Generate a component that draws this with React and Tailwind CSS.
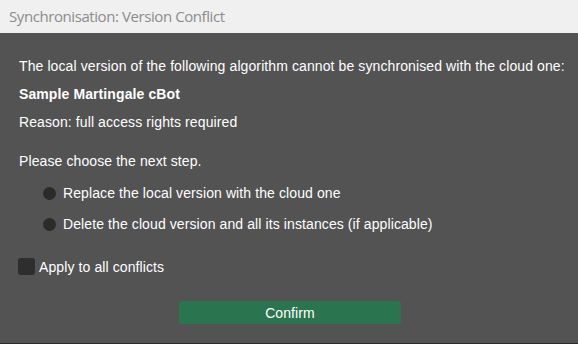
export default function App() {
  return (
    <div className="w-[578px] h-[344px] flex flex-col bg-[#535353] overflow-hidden" style={{ fontFamily: '"Liberation Sans", Arial, sans-serif' }}>
      <div className="h-[33px] bg-[#f0f0f0] flex items-center pl-[9px] text-[15px] text-[#8c8c8c]" style={{ fontFamily: '"Open Sans", "Noto Sans", sans-serif' }}>
        <span className="tracking-[-0.42px]">Synchronisation: Version Conflict</span>
      </div>
      <div className="flex-1 flex flex-col pl-[19px] pt-[25px] text-[14px] leading-[16px] tracking-[0.1px] text-white">
        <div>The local version of the following algorithm cannot be synchronised with the cloud one:</div>
        <div className="mt-[12px] font-bold">Sample Martingale cBot</div>
        <div className="mt-[12px]">Reason: full access rights required</div>
        <div className="mt-[23px]">Please choose the next step.</div>
        <div className="mt-[16px] pl-[24px] flex items-center gap-[7px]">
          <span className="w-[13px] h-[13px] rounded-full bg-[#2b2b2b]" />
          <span>Replace the local version with the cloud one</span>
        </div>
        <div className="mt-[15px] pl-[24px] flex items-center gap-[7px]">
          <span className="w-[13px] h-[13px] rounded-full bg-[#2b2b2b]" />
          <span>Delete the cloud version and all its instances (if applicable)</span>
        </div>
        <div className="mt-[26px] flex items-center gap-[4px] -ml-[1px]">
          <span className="w-[17px] h-[17px] rounded-[3px] bg-[#2e2e2e]" />
          <span>Apply to all conflicts</span>
        </div>
        <div className="mt-[26px] ml-[160px] w-[222px] h-[23px] rounded-[3px] bg-[#2a7550] flex items-center justify-center">
          Confirm
        </div>
      </div>
      <div className="h-[1px] bg-[#2a2a2a]" />
    </div>
  );
}
